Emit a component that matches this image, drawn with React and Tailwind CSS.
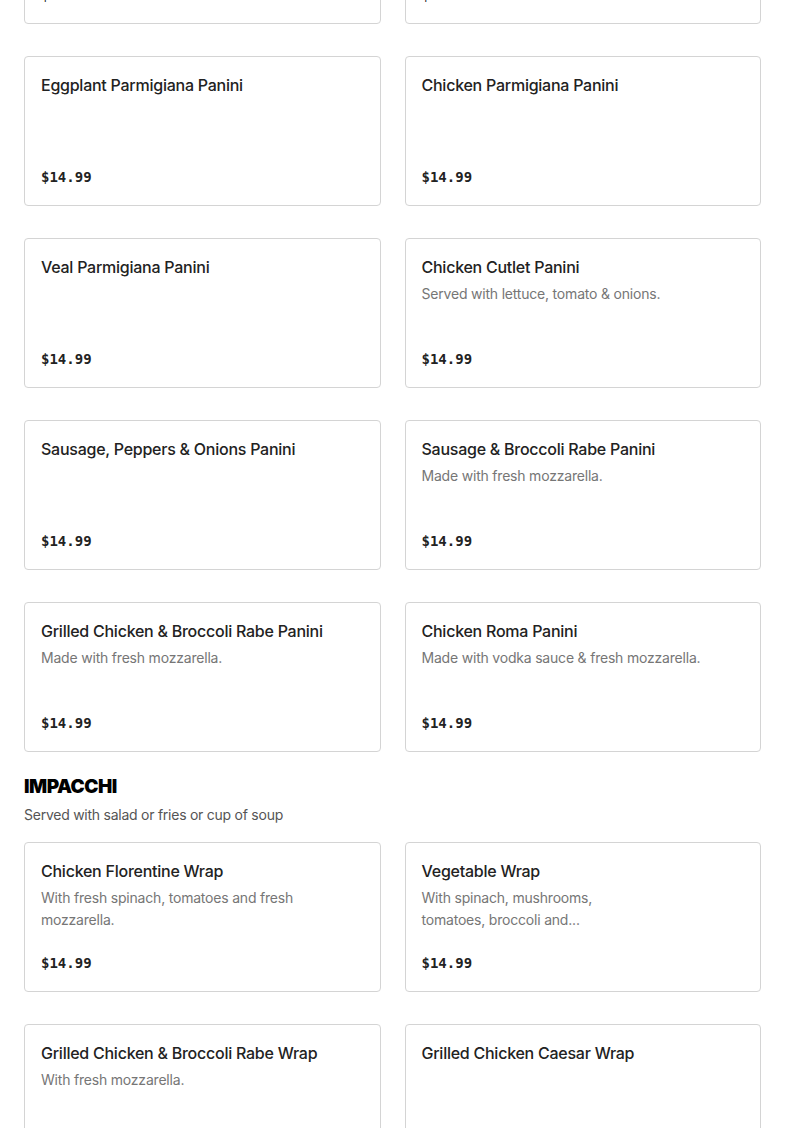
const paninis = [
  { name: 'Meatball Parmigiana Panini', price: '$14.99' },
  { name: 'Chicken Pesto Panini', price: '$14.99' },
  { name: 'Eggplant Parmigiana Panini', price: '$14.99' },
  { name: 'Chicken Parmigiana Panini', price: '$14.99' },
  { name: 'Veal Parmigiana Panini', price: '$14.99' },
  { name: 'Chicken Cutlet Panini', desc: 'Served with lettuce, tomato & onions.', price: '$14.99' },
  { name: 'Sausage, Peppers & Onions Panini', price: '$14.99' },
  { name: 'Sausage & Broccoli Rabe Panini', desc: 'Made with fresh mozzarella.', price: '$14.99' },
  { name: 'Grilled Chicken & Broccoli Rabe Panini', desc: 'Made with fresh mozzarella.', price: '$14.99' },
  { name: 'Chicken Roma Panini', desc: 'Made with vodka sauce & fresh mozzarella.', price: '$14.99' },
];

const wraps = [
  { name: 'Chicken Florentine Wrap', desc: ['With fresh spinach, tomatoes and fresh', 'mozzarella.'], price: '$14.99' },
  { name: 'Vegetable Wrap', desc: ['With spinach, mushrooms,', 'tomatoes, broccoli and...'], price: '$14.99' },
  { name: 'Grilled Chicken & Broccoli Rabe Wrap', desc: 'With fresh mozzarella.', price: '$14.99' },
  { name: 'Grilled Chicken Caesar Wrap', price: '$14.99' },
];

function ItemCard({ item }) {
  const lines = Array.isArray(item.desc) ? item.desc : item.desc ? [item.desc] : [];
  return (
    <div className="h-[150px] flex flex-col justify-between border border-[#d4d4d4] rounded bg-white px-4 pt-4 pb-4">
      <div>
        <h3 className="text-[16px] leading-6 font-medium text-[#222222] tracking-[-0.25px]">{item.name}</h3>
        {lines.length > 0 && (
          <p className="mt-1 text-[14px] leading-[22px] text-[#767676] tracking-[-0.2px]">
            {lines.map((l, i) => (
              <span key={i} className="block">{l}</span>
            ))}
          </p>
        )}
      </div>
      <div className="text-[14px] leading-6 font-semibold text-[#222222]" style={{ fontFamily: '"DejaVu Sans Mono", "Liberation Mono", monospace' }}>
        {item.price}
      </div>
    </div>
  );
}

export default function App() {
  return (
    <div className="bg-white min-h-screen overflow-hidden" style={{ fontFamily: 'Inter, "Liberation Sans", sans-serif' }}>
      <div className="px-6 mt-[-126px] pb-10">
        <div className="grid grid-cols-2 gap-x-6 gap-y-8">
          {paninis.map((p) => (
            <ItemCard key={p.name} item={p} />
          ))}
        </div>

        <div className="mt-[21px]">
          <h2 className="text-[19px] leading-7 font-black text-black tracking-[-0.5px]">IMPACCHI</h2>
          <p className="mt-[3px] text-[14px] leading-[22px] text-[#555555] tracking-[-0.25px]">Served with salad or fries or cup of soup</p>
        </div>

        <div className="mt-4 grid grid-cols-2 gap-x-6 gap-y-8">
          {wraps.map((p) => (
            <ItemCard key={p.name} item={p} />
          ))}
        </div>
      </div>
    </div>
  );
}
